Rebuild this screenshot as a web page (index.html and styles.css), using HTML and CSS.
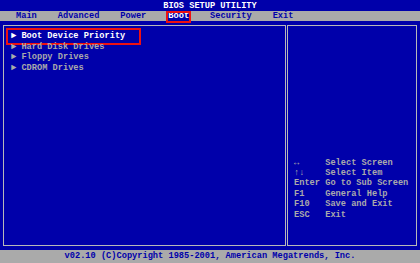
FILE: index.html
```html
<!DOCTYPE html>
<html>
<head>
<meta charset="utf-8">
<link rel="stylesheet" href="styles.css">
</head>
<body>
<div class="screen">
  <div class="title">BIOS SETUP UTILITY</div>
  <div class="menubar">
    <span class="tab">Main</span>
    <span class="tab">Advanced</span>
    <span class="tab">Power</span>
    <span class="tab active">Boot</span>
    <span class="tab">Security</span>
    <span class="tab">Exit</span>
  </div>
  <div class="main">
    <div class="panel left">
      <div class="item selected"><span class="arrow">►</span>Boot Device Priority</div>
      <div class="item"><span class="arrow">►</span>Hard Disk Drives</div>
      <div class="item"><span class="arrow">►</span>Floppy Drives</div>
      <div class="item"><span class="arrow">►</span>CDROM Drives</div>
    </div>
    <div class="panel right">
      <div class="help">
        <div class="row"><span class="key">↔</span><span>Select Screen</span></div>
        <div class="row"><span class="key">↑↓</span><span>Select Item</span></div>
        <div class="row"><span class="key">Enter</span><span>Go to Sub Screen</span></div>
        <div class="row"><span class="key">F1</span><span>General Help</span></div>
        <div class="row"><span class="key">F10</span><span>Save and Exit</span></div>
        <div class="row"><span class="key">ESC</span><span>Exit</span></div>
      </div>
    </div>
  </div>
  <div class="footer">v02.10 (C)Copyright 1985-2001, American Megatrends, Inc.</div>
</div>
</body>
</html>
```

FILE: styles.css
```css
html, body {
  margin: 0;
  padding: 0;
  background: #0000aa;
}
.screen {
  width: 420px;
  height: 263px;
  overflow: hidden;
  background: #0000aa;
  font-family: "Liberation Mono", "DejaVu Sans Mono", monospace;
  font-size: 8.67px;
  font-weight: bold;
  white-space: nowrap;
  display: flex;
  flex-direction: column;
}
.title {
  flex: none;
  height: 11px;
  line-height: 12px;
  color: #ffffff;
  text-align: center;
}
.menubar {
  flex: none;
  height: 10px;
  line-height: 10px;
  background: #aaaaaa;
  color: #0000aa;
  display: flex;
  gap: 21px;
  padding-left: 16px;
}
.tab {
  position: relative;
}
.tab:nth-child(3) {
  margin-right: 1px;
}
.tab.active {
  background: #0000aa;
  color: #ffffff;
}
.tab.active::after {
  content: "";
  position: absolute;
  left: -2px;
  right: -2px;
  top: 0;
  bottom: -2px;
  border: 2px solid #ee1111;
}
.main {
  flex: none;
  height: 221px;
  display: flex;
  gap: 1px;
  padding: 4px 3px 4px 3px;
}
.panel {
  border: 1px solid #b8b8b8;
}
.left {
  width: 281px;
  padding-top: 5px;
}
.right {
  flex: 1;
  display: flex;
  flex-direction: column;
  justify-content: flex-end;
  padding-bottom: 25px;
}
.item {
  position: relative;
  height: 10.5px;
  line-height: 10.5px;
  padding-left: 7px;
  color: #aaaaaa;
}
.item.selected {
  color: #ffffff;
}
.item.selected::after {
  content: "";
  position: absolute;
  left: 2px;
  width: 131px;
  top: -3px;
  bottom: -3px;
  border: 2px solid #ee1111;
}
.arrow {
  font-size: 9px;
  display: inline-block;
  width: 10.4px;
}
.help {
  padding-left: 6px;
  color: #aaaaaa;
}
.row {
  height: 10.4px;
  line-height: 10.4px;
  display: flex;
}
.key {
  width: 31.2px;
}
.footer {
  flex: none;
  height: 13px;
  line-height: 12px;
  background: #aaaaaa;
  color: #0000aa;
  text-align: center;
}
```
